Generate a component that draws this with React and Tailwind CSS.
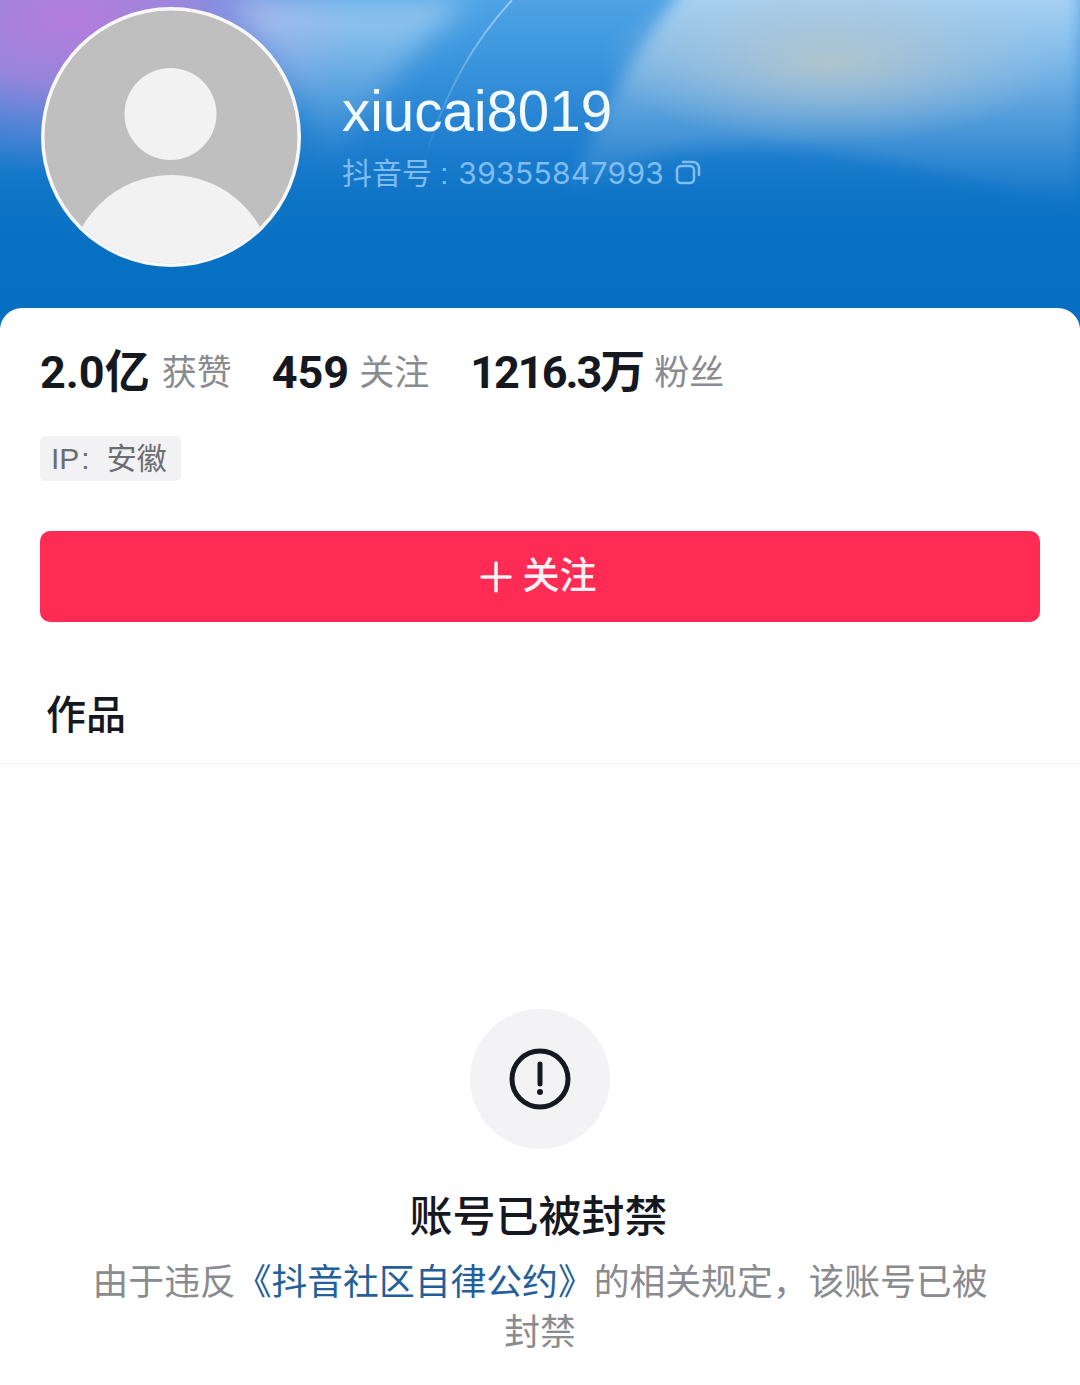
export default function App() {
  return (
    <div className="w-[1080px] h-[1385px] overflow-hidden bg-white font-['Liberation_Sans','Noto_Sans_CJK_SC',sans-serif]">
      <header className="relative h-[328px] overflow-hidden flex items-start pl-[41px] pt-[7px] gap-[41px] bg-[linear-gradient(180deg,#4fa3e6_0%,#4099e0_14%,#2f8ad6_30%,#1c7ccd_46%,#0e74c6_60%,#0670c2_78%,#066fc1_100%)]">
        <svg className="absolute inset-0" width="1080" height="328" viewBox="0 0 1080 328" fill="none">
          <defs>
            <linearGradient id="fade" x1="0" y1="0" x2="0" y2="1">
              <stop offset="0" stopColor="#ffffff" stopOpacity="0.55" />
              <stop offset="0.55" stopColor="#ffffff" stopOpacity="0.22" />
              <stop offset="1" stopColor="#ffffff" stopOpacity="0" />
            </linearGradient>
            <linearGradient id="fadeSoft" x1="0" y1="0" x2="0" y2="1">
              <stop offset="0" stopColor="#ffffff" stopOpacity="0.42" />
              <stop offset="1" stopColor="#ffffff" stopOpacity="0" />
            </linearGradient>
            <radialGradient id="purple">
              <stop offset="0" stopColor="#b57cdc" />
              <stop offset="0.4" stopColor="#a982dc" stopOpacity="0.85" />
              <stop offset="0.75" stopColor="#8f86dc" stopOpacity="0.35" />
              <stop offset="1" stopColor="#8f86dc" stopOpacity="0" />
            </radialGradient>
            <radialGradient id="grey">
              <stop offset="0" stopColor="#b9c6c8" stopOpacity="0.85" />
              <stop offset="1" stopColor="#b7c8d6" stopOpacity="0" />
            </radialGradient>
            <filter id="b8" x="-20%" y="-30%" width="140%" height="160%"><feGaussianBlur stdDeviation="8" /></filter>
            <filter id="b14" x="-20%" y="-20%" width="140%" height="140%"><feGaussianBlur stdDeviation="14" /></filter>
          </defs>
          <ellipse cx="70" cy="20" rx="290" ry="155" fill="url(#purple)" />
          <path d="M470 0H230C260 40 300 90 330 170C370 100 420 40 470 0Z" fill="url(#fadeSoft)" filter="url(#b14)" />
          <path d="M1080 -20H690C650 30 610 90 570 190C670 130 820 130 1080 210Z" fill="url(#fade)" filter="url(#b8)" />
          <ellipse cx="830" cy="60" rx="230" ry="85" fill="url(#grey)" />
          <path d="M512 0C475 40 445 90 423 165" stroke="url(#fadeSoft)" strokeWidth="2" />
        </svg>
        <svg className="relative shrink-0" width="260" height="260" viewBox="0 0 260 260">
          <defs>
            <clipPath id="avatarClip"><circle cx="130" cy="130" r="126.5" /></clipPath>
          </defs>
          <circle cx="130" cy="130" r="130" fill="#f8f8f8" />
          <g clipPath="url(#avatarClip)">
            <circle cx="130" cy="130" r="127" fill="#bfbfbf" />
            <circle cx="129.5" cy="107" r="46" fill="#f2f2f2" />
            <circle cx="130" cy="270" r="102" fill="#f2f2f2" />
          </g>
        </svg>
        <div className="relative pt-[75px]">
          <div className="text-[56.5px] leading-[60px] text-[#f2f9ff]">xiucai8019</div>
          <div className="mt-[7px] flex items-center h-[48px] text-[30px] text-[#7fbcef]">
            <span>抖音号</span>
            <span className="ml-[8px]">:</span>
            <span className="ml-[10px] font-['Inter'] tracking-[0.3px]">39355847993</span>
            <svg className="ml-[11px]" width="26" height="26" viewBox="0 0 26 26" fill="none" stroke="#82bdf0" strokeWidth="2.5">
              <rect x="2" y="6" width="17" height="17" rx="4" />
              <path d="M8 2h10a6 6 0 0 1 6 6v7" strokeLinecap="round" />
            </svg>
          </div>
        </div>
      </header>

      <main className="relative -mt-[20px] rounded-t-[22px] bg-white">
        <div className="flex items-center h-[128px] pt-[2px] pl-[40px]">
          <Stat value="2.0亿" label="获赞" cls="gap-[12px]" />
          <Stat value="459" label="关注" cls="ml-[40px] gap-[10px]" />
          <Stat value="1216.3万" label="粉丝" cls="ml-[41px] gap-[11px]" tight />
        </div>
        <div className="pl-[40px]">
          <div className="inline-flex items-center w-[141px] h-[45px] pl-[11px] rounded-[5px] bg-[#f2f2f4] text-[30px] text-[#6c6d72]">
            <span>IP</span>
            <span className="ml-[2px]">:</span>
            <span className="ml-[17px]">安徽</span>
          </div>
        </div>
        <div className="mx-[40px] mt-[50px] h-[91px] rounded-[10px] bg-[#fe2c55] flex items-center justify-center gap-[11px] text-[37px] font-medium text-[#fff2f4]">
          <svg className="-ml-[4px]" width="32" height="32" viewBox="0 0 32 32" stroke="#fff2f4" strokeWidth="3.6" strokeLinecap="round">
            <path d="M16 2v28M2 16h28" />
          </svg>
          <span>关注</span>
        </div>
        <div className="h-[142px] pl-[46px] pt-[67px] border-b border-[#f2f2f3] box-border">
          <div className="text-[40px] leading-[52px] font-medium text-[#16181f]">作品</div>
        </div>
        <div className="flex flex-col items-center pt-[245px] px-[80px]">
          <div className="w-[140px] h-[140px] rounded-full bg-[#f3f3f5] flex items-center justify-center">
            <svg width="64" height="64" viewBox="0 0 64 64" fill="none" stroke="#16181f">
              <circle cx="32" cy="32" r="28" strokeWidth="5" />
              <path d="M32 17v20" strokeWidth="5" strokeLinecap="round" />
              <circle cx="32" cy="45" r="3" fill="#16181f" stroke="none" />
            </svg>
          </div>
          <h1 className="mt-[40px] mr-[3px] text-[43px] leading-[56px] font-medium text-[#16181f]">账号已被封禁</h1>
          <p className="mt-[13px] text-center text-[35.8px] leading-[50px] text-[#8a8b90]">
            由于违反<span className="text-[#245f99]">《抖音社区自律公约》</span>的相关规定，该账号已被封禁
          </p>
        </div>
      </main>
    </div>
  );
}

function Stat({ value, label, cls = "", tight = false }) {
  return (
    <div className={`flex items-center ${cls}`}>
      <span className={`font-['Roboto','Noto_Sans_CJK_SC',sans-serif] text-[45px] leading-[52px] font-bold text-[#16181f] ${tight ? "tracking-[-2px]" : ""}`}>{value}</span>
      <span className="text-[35px] leading-[52px] text-[#8a8b90]">{label}</span>
    </div>
  );
}
